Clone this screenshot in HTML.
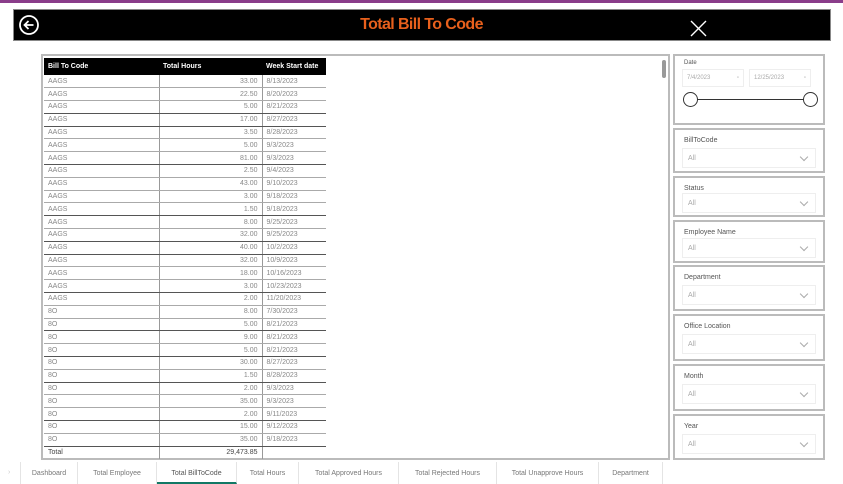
<!DOCTYPE html>
<html><head><style>
*{margin:0;padding:0;box-sizing:border-box}
body{width:843px;height:484px;background:#fff;position:relative;overflow:hidden;font-family:"Liberation Sans",sans-serif;color:#777}
.abs{position:absolute}
.hdr{left:13px;top:9px;width:818px;height:32px;background:#000;border:1px solid #888}
.title{left:0;right:0;top:16px;text-align:center;color:#e8601c;font-weight:bold;font-size:16px;letter-spacing:-0.6px}
.panel{border:2px solid #bbb}
table{border-collapse:collapse;font-size:7px;position:absolute;left:44px;top:58px;width:282px}
th{background:#000;color:#fff;text-align:left;height:17px;padding:0 4px;font-size:7px}
td{height:12.8px;padding:0 4px;border-bottom:1px solid #aaa;color:#888;white-space:nowrap}
td:nth-child(2){text-align:right;border-left:1px solid #999;border-right:1px solid #999}
tr.d td{border-bottom:1px solid #555}
tr.t td{color:#444;font-weight:normal;border-bottom:none}
.sl{position:absolute;left:673px;width:152px;border:2px solid #bbb}
.lab{position:absolute;left:9px;top:7px;font-size:7px;color:#555}
.dd{position:absolute;left:7px;right:7px;height:20px;border:1px solid #eee;font-size:7px;color:#aaa;padding:6px 5px}
.dd:after{content:"";position:absolute;right:8px;top:5px;width:5px;height:5px;border-right:1px solid #aaa;border-bottom:1px solid #aaa;transform:rotate(45deg)}
.tab{position:absolute;top:462px;height:22px;font-size:7px;color:#777;padding-top:8px;text-align:center;border-right:1px solid #e4e4e4}
</style></head><body>
<div class="abs" style="left:0;top:0;width:843px;height:3px;background:#8a3d8a"></div>
<div class="abs hdr"></div>
<div class="abs title">Total Bill To Code</div>
<svg class="abs" style="left:18px;top:14px" width="22" height="22" viewBox="0 0 22 22"><circle cx="11" cy="11" r="9" fill="none" stroke="#fff" stroke-width="1.8"/><path d="M15.5 11H7M10.5 7L6.5 11L10.5 15" fill="none" stroke="#fff" stroke-width="1.8"/></svg>
<svg class="abs" style="left:690px;top:20px" width="17" height="17" viewBox="0 0 17 17"><path d="M1 1L16 16M16 1L1 16" stroke="#fff" stroke-width="1.4"/></svg>
<div class="abs panel" style="left:41px;top:54px;width:629px;height:406px"></div>
<div class="abs" style="left:662px;top:60px;width:4px;height:18px;background:#999;border-radius:2px"></div>
<table>
<tr><th style="width:115px">Bill To Code</th><th style="width:103px">Total Hours</th><th>Week Start date</th></tr>
<tr><td>AAGS</td><td>33.00</td><td>8/13/2023</td></tr>
<tr><td>AAGS</td><td>22.50</td><td>8/20/2023</td></tr>
<tr class="d"><td>AAGS</td><td>5.00</td><td>8/21/2023</td></tr>
<tr class="d"><td>AAGS</td><td>17.00</td><td>8/27/2023</td></tr>
<tr><td>AAGS</td><td>3.50</td><td>8/28/2023</td></tr>
<tr><td>AAGS</td><td>5.00</td><td>9/3/2023</td></tr>
<tr class="d"><td>AAGS</td><td>81.00</td><td>9/3/2023</td></tr>
<tr><td>AAGS</td><td>2.50</td><td>9/4/2023</td></tr>
<tr><td>AAGS</td><td>43.00</td><td>9/10/2023</td></tr>
<tr><td>AAGS</td><td>3.00</td><td>9/18/2023</td></tr>
<tr class="d"><td>AAGS</td><td>1.50</td><td>9/18/2023</td></tr>
<tr><td>AAGS</td><td>8.00</td><td>9/25/2023</td></tr>
<tr class="d"><td>AAGS</td><td>32.00</td><td>9/25/2023</td></tr>
<tr class="d"><td>AAGS</td><td>40.00</td><td>10/2/2023</td></tr>
<tr><td>AAGS</td><td>32.00</td><td>10/9/2023</td></tr>
<tr><td>AAGS</td><td>18.00</td><td>10/16/2023</td></tr>
<tr class="d"><td>AAGS</td><td>3.00</td><td>10/23/2023</td></tr>
<tr><td>AAGS</td><td>2.00</td><td>11/20/2023</td></tr>
<tr><td>8O</td><td>8.00</td><td>7/30/2023</td></tr>
<tr class="d"><td>8O</td><td>5.00</td><td>8/21/2023</td></tr>
<tr><td>8O</td><td>9.00</td><td>8/21/2023</td></tr>
<tr class="d"><td>8O</td><td>5.00</td><td>8/21/2023</td></tr>
<tr><td>8O</td><td>30.00</td><td>8/27/2023</td></tr>
<tr class="d"><td>8O</td><td>1.50</td><td>8/28/2023</td></tr>
<tr><td>8O</td><td>2.00</td><td>9/3/2023</td></tr>
<tr><td>8O</td><td>35.00</td><td>9/3/2023</td></tr>
<tr class="d"><td>8O</td><td>2.00</td><td>9/11/2023</td></tr>
<tr><td>8O</td><td>15.00</td><td>9/12/2023</td></tr>
<tr class="d"><td>8O</td><td>35.00</td><td>9/18/2023</td></tr>
<tr class="t"><td>Total</td><td>29,473.85</td><td></td></tr>
</table>

<div class="sl" style="top:54px;height:71px"><div class="lab" style="font-size:6px;top:4px">Date</div>
<div class="abs" style="left:7px;top:13px;width:62px;height:18px;border:1px solid #eee;font-size:6px;color:#aaa;padding:5px 4px">7/4/2023<span style="float:right">▫</span></div>
<div class="abs" style="left:74px;top:13px;width:62px;height:18px;border:1px solid #eee;font-size:6px;color:#aaa;padding:5px 4px">12/25/2023<span style="float:right">▫</span></div>
<div class="abs" style="left:18px;top:43px;width:115px;height:1px;background:#333"></div>
<div class="abs" style="left:8px;top:36px;width:15px;height:15px;border:1.5px solid #333;border-radius:50%;background:#fff"></div>
<div class="abs" style="left:128px;top:36px;width:15px;height:15px;border:1.5px solid #333;border-radius:50%;background:#fff"></div>
</div>
<div class="sl" style="top:128px;height:45px"><div class="lab">BillToCode</div><div class="dd" style="top:18px">All</div></div>
<div class="sl" style="top:176px;height:41px"><div class="lab">Status</div><div class="dd" style="top:15px">All</div></div>
<div class="sl" style="top:220px;height:43px"><div class="lab">Employee Name</div><div class="dd" style="top:16px">All</div></div>
<div class="sl" style="top:265px;height:46px"><div class="lab">Department</div><div class="dd" style="top:18px">All</div></div>
<div class="sl" style="top:314px;height:47px"><div class="lab">Office Location</div><div class="dd" style="top:18px">All</div></div>
<div class="sl" style="top:364px;height:47px"><div class="lab">Month</div><div class="dd" style="top:18px">All</div></div>
<div class="sl" style="top:414px;height:46px"><div class="lab">Year</div><div class="dd" style="top:18px">All</div></div>

<div class="abs" style="left:0;top:462px;width:843px;height:22px;background:#fff"></div>
<div class="abs" style="left:8px;top:469px;font-size:7px;color:#ccc">›</div>
<div class="tab" style="left:20px;width:58px;border-left:1px solid #e4e4e4">Dashboard</div>
<div class="tab" style="left:78px;width:79px">Total Employee</div>
<div class="tab" style="left:157px;width:80px;color:#555;border-bottom:2px solid #117865">Total BillToCode</div>
<div class="tab" style="left:237px;width:62px">Total Hours</div>
<div class="tab" style="left:299px;width:100px">Total Approved Hours</div>
<div class="tab" style="left:399px;width:98px">Total Rejected Hours</div>
<div class="tab" style="left:497px;width:102px">Total Unapprove Hours</div>
<div class="tab" style="left:599px;width:64px">Department</div>
</body></html>
